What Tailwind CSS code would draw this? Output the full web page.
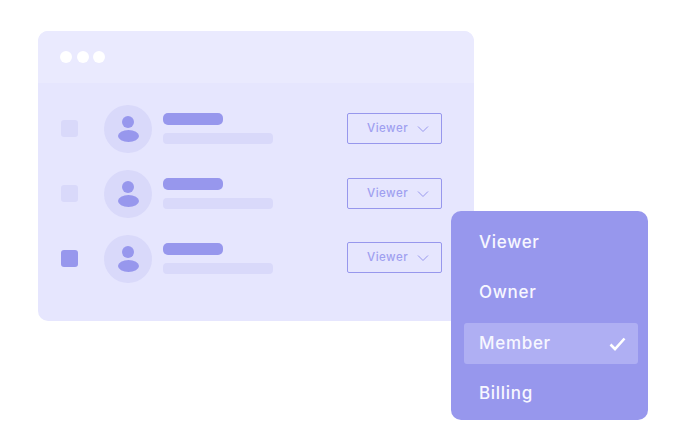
<!DOCTYPE html>
<html lang="en">
<head>
    <meta charset="UTF-8">
    <title>Roles</title>
    <script src="https://cdn.jsdelivr.net/npm/@tailwindcss/browser@4"></script>
</head>
<body class="bg-white font-['Inter',sans-serif]">
    <div class="relative w-[689px] h-[434px] overflow-hidden pt-[31px] pl-[38px]">
        <div class="w-[436px] h-[290px] rounded-[10px] bg-[#e6e6fe] overflow-hidden">
            <div class="h-[52px] bg-[#eaeafe] flex items-center gap-[4.5px] pl-[22px]">
                <span class="size-[12px] rounded-full bg-white"></span>
                <span class="size-[12px] rounded-full bg-white"></span>
                <span class="size-[12px] rounded-full bg-white"></span>
            </div>
            <div class="pt-[22px] flex flex-col gap-[17px]">

                <div class="h-[48px] flex items-center pl-[23px]">
                    <div class="size-[17px] mb-[2px] rounded-[3px] bg-[#d9d9fa]"></div>
                    <div class="ml-[26px] size-[48px] rounded-full bg-[#d9d9fa] flex flex-col items-center justify-center gap-[2px]">
                        <span class="size-[12px] rounded-full bg-[#9797ed]"></span>
                        <span class="w-[21px] h-[12px] rounded-[50%] bg-[#9797ed]"></span>
                    </div>
                    <div class="ml-[11px] mb-[2px] flex flex-col gap-[8px]">
                        <div class="w-[60px] h-[12px] rounded-[5px] bg-[#9797ed]"></div>
                        <div class="w-[110px] h-[11px] rounded-[4px] bg-[#d9d9fa]"></div>
                    </div>
                    <div class="ml-[74px] mb-[2px] w-[95px] h-[31px] rounded-[2px] border border-[#9797ed] flex items-center pt-[2px] pl-[19px] text-[11.5px] font-medium tracking-[0.5px] text-[#9f9ff0]">
                        <span>Viewer</span>
                        <svg class="ml-[9px]" width="12" height="8" viewBox="0 0 12 8" fill="none" stroke="#9797ed" stroke-width="1"><path d="M1 1.5l5 5 5-5"/></svg>
                    </div>
                </div>

                <div class="h-[48px] flex items-center pl-[23px]">
                    <div class="size-[17px] mb-[2px] rounded-[3px] bg-[#d9d9fa]"></div>
                    <div class="ml-[26px] size-[48px] rounded-full bg-[#d9d9fa] flex flex-col items-center justify-center gap-[2px]">
                        <span class="size-[12px] rounded-full bg-[#9797ed]"></span>
                        <span class="w-[21px] h-[12px] rounded-[50%] bg-[#9797ed]"></span>
                    </div>
                    <div class="ml-[11px] mb-[2px] flex flex-col gap-[8px]">
                        <div class="w-[60px] h-[12px] rounded-[5px] bg-[#9797ed]"></div>
                        <div class="w-[110px] h-[11px] rounded-[4px] bg-[#d9d9fa]"></div>
                    </div>
                    <div class="ml-[74px] mb-[2px] w-[95px] h-[31px] rounded-[2px] border border-[#9797ed] flex items-center pt-[2px] pl-[19px] text-[11.5px] font-medium tracking-[0.5px] text-[#9f9ff0]">
                        <span>Viewer</span>
                        <svg class="ml-[9px]" width="12" height="8" viewBox="0 0 12 8" fill="none" stroke="#9797ed" stroke-width="1"><path d="M1 1.5l5 5 5-5"/></svg>
                    </div>
                </div>

                <div class="h-[48px] flex items-center pl-[23px]">
                    <div class="size-[17px] mb-[2px] rounded-[3px] bg-[#9797ed]"></div>
                    <div class="ml-[26px] size-[48px] rounded-full bg-[#d9d9fa] flex flex-col items-center justify-center gap-[2px]">
                        <span class="size-[12px] rounded-full bg-[#9797ed]"></span>
                        <span class="w-[21px] h-[12px] rounded-[50%] bg-[#9797ed]"></span>
                    </div>
                    <div class="ml-[11px] mb-[2px] flex flex-col gap-[8px]">
                        <div class="w-[60px] h-[12px] rounded-[5px] bg-[#9797ed]"></div>
                        <div class="w-[110px] h-[11px] rounded-[4px] bg-[#d9d9fa]"></div>
                    </div>
                    <div class="ml-[74px] mb-[4px] w-[95px] h-[31px] rounded-[2px] border border-[#9797ed] flex items-center pt-[2px] pl-[19px] text-[11.5px] font-medium tracking-[0.5px] text-[#9f9ff0]">
                        <span>Viewer</span>
                        <svg class="ml-[9px]" width="12" height="8" viewBox="0 0 12 8" fill="none" stroke="#9797ed" stroke-width="1"><path d="M1 1.5l5 5 5-5"/></svg>
                    </div>
                </div>
            </div>
        </div>

        <!-- dropdown sits over the card corner -->
        <div class="absolute left-[451px] top-[211px] w-[197px] h-[209px] rounded-[10px] bg-[#9797ed] pt-[11px] pl-[13px] pr-[10px] text-[17px] font-medium tracking-[0.7px] text-[#f7f7ff]">
            <div class="h-[41px] flex items-center pl-[15px]">Viewer</div>
            <div class="h-[41px] mt-[9px] flex items-center pl-[15px]">Owner</div>
            <div class="h-[41px] mt-[10px] flex items-center justify-between pl-[15px] pr-[12px] rounded-[3px] bg-[#afaff3]">
                <span>Member</span>
                <svg width="17" height="14" viewBox="0 0 17 14" fill="none" stroke="#ffffff" stroke-width="2.6"><path d="M1.5 7.5l4.5 4.5 9.5-10.5"/></svg>
            </div>
            <div class="h-[41px] mt-[9px] flex items-center pl-[15px]">Billing</div>
        </div>
    </div>
</body>
</html>
